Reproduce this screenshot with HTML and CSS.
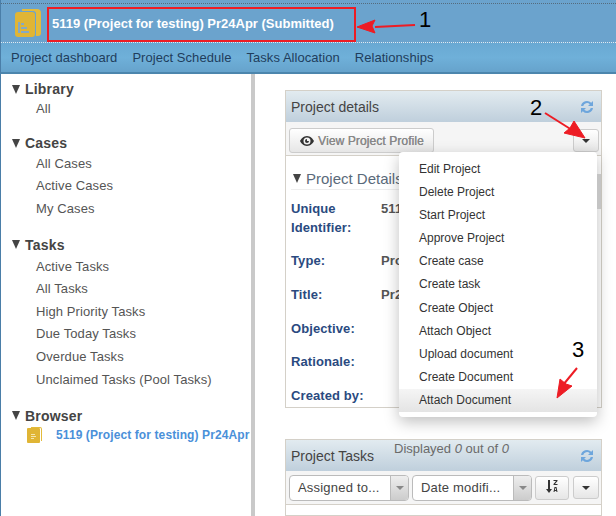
FILE: index.html
```html
<!DOCTYPE html>
<html lang="en">
<head>
    <meta charset="UTF-8">
    <meta name="viewport" content="width=device-width, initial-scale=1.0">
    <title>Project dashboard</title>
    <link rel="stylesheet" href="styles.css">
</head>
<body>
    <header class="topbar">
        <div class="topbar-inner">
            <svg class="logo" width="26" height="28" viewBox="0 0 26 28">
                <path d="M7 0h15q4 0 4 4v20q0 3-3 3h-2V5q0-3-3-3H7z" fill="#e3bb3b"/>
                <path d="M3 3h14q3 0 3 3v19q0 3-3 3H3q-3 0-3-3V6q0-3 3-3z" fill="#e0b535"/>
                <path d="M3 13h2v11H3zM6 14h3v2H6zm0 4h6v2H6zm0 4h8v2H6z" fill="#86a9c4"/>
            </svg>
            <span class="title">5119 (Project for testing) Pr24Apr (Submitted)</span>
        </div>
    </header>
    <nav class="navbar">
        <a>Project dashboard</a>
        <a>Project Schedule</a>
        <a>Tasks Allocation</a>
        <a>Relationships</a>
    </nav>

    <div class="layout">
        <aside class="sidebar">
            <section class="side-group library">
                <h3><i class="caret"></i>Library</h3>
                <ul><li>All</li></ul>
            </section>
            <section class="side-group cases">
                <h3><i class="caret"></i>Cases</h3>
                <ul>
                    <li>All Cases</li>
                    <li>Active Cases</li>
                    <li>My Cases</li>
                </ul>
            </section>
            <section class="side-group tasks-group">
                <h3><i class="caret"></i>Tasks</h3>
                <ul>
                    <li>Active Tasks</li>
                    <li>All Tasks</li>
                    <li>High Priority Tasks</li>
                    <li>Due Today Tasks</li>
                    <li>Overdue Tasks</li>
                    <li>Unclaimed Tasks (Pool Tasks)</li>
                </ul>
            </section>
            <section class="side-group">
                <h3><i class="caret"></i>Browser</h3>
                <div class="browser-item">
                    <svg width="15" height="16" viewBox="0 0 15 16">
                        <path d="M4 0h9q2 0 2 2v12h-1V2q0-1-1-1H4z" fill="#e3bb3b"/>
                        <path d="M1 1h11q1 0 1 1v13q0 1-1 1H1q-1 0-1-1V2q0-1 1-1z" fill="#e0b535"/>
                        <path d="M4 7h4v1H4zm0 2h5v1H4zm0 2h3v1H4z" fill="#f4e6b0"/>
                    </svg>
                    <span>5119 (Project for testing) Pr24Apr</span>
                </div>
            </section>
        </aside>

        <main class="content">
            <div class="panel details">
                <div class="panel-head">
                    <span>Project details</span>
                    <svg class="refresh" width="14" height="14" viewBox="0 0 14 14">
                        <path d="M1 6A6 6 0 0 1 11.200 2.800L13 1v5H8l1.800-1.800A4 4 0 0 0 3.200 6zM13 8A6 6 0 0 1 2.800 11.200L1 13V8h5l-1.800 1.800A4 4 0 0 0 10.800 8z" fill="#6ea6dc"/>
                    </svg>
                </div>
                <div class="toolbar">
                    <button class="btn profile">
                        <svg width="14" height="10" viewBox="0 0 14 10"><path d="M7 0C3.500 0 1 3 0 5c1 2 3.500 5 7 5s6-3 7-5c-1-2-3.500-5-7-5zm0 1.500a3.500 3.500 0 1 1 0 7 3.500 3.500 0 0 1 0-7zM7 3a2 2 0 1 0 2 2H7z" fill="#333"/></svg>
                        View Project Profile
                    </button>
                    <button class="btn caret-btn"><i class="mini-caret"></i></button>
                </div>
                <div class="details-body">
                    <h4><i class="caret"></i>Project Details</h4>
                    <dl>
                        <div class="tall"><dt>Unique Identifier:</dt><dd>5119</dd></div>
                        <div><dt>Type:</dt><dd>Project</dd></div>
                        <div><dt>Title:</dt><dd>Pr24Apr</dd></div>
                        <div><dt>Objective:</dt><dd></dd></div>
                        <div><dt>Rationale:</dt><dd></dd></div>
                        <div><dt>Created by:</dt><dd></dd></div>
                    </dl>
                </div>
            </div>

            <div class="panel tasks">
                <div class="panel-head">
                    <span>Project Tasks</span>
                    <span class="displayed">Displayed <em>0</em> out of <em>0</em></span>
                    <svg class="refresh" width="14" height="14" viewBox="0 0 14 14">
                        <path d="M1 6A6 6 0 0 1 11.200 2.800L13 1v5H8l1.800-1.800A4 4 0 0 0 3.200 6zM13 8A6 6 0 0 1 2.800 11.200L1 13V8h5l-1.800 1.800A4 4 0 0 0 10.800 8z" fill="#6ea6dc"/>
                    </svg>
                </div>
                <div class="toolbar task-tools">
                    <div class="select"><span>Assigned to...</span><b><i class="mini-caret grey"></i></b></div>
                    <div class="select"><span>Date modifi...</span><b><i class="mini-caret grey"></i></b></div>
                    <button class="btn sort">
                        <svg width="12" height="13" viewBox="0 0 12 13"><path d="M2 0h2v9h2l-3 4-3-4h2z" fill="#333"/><path d="M7.500 0h4v1l-2.500 3h2.500v1h-4V4L10 1H7.500zM8.500 7h2l1 5h-1l-.2-1H8.700l-.2 1h-1zm.4 3h1.200l-.4-2h-.4z" fill="#333"/></svg>
                    </button>
                    <button class="btn caret-btn"><i class="mini-caret"></i></button>
                </div>
            </div>
        </main>
    </div>

    <!-- dropdown sits over the details panel -->
    <ul class="menu">
        <li>Edit Project</li>
        <li>Delete Project</li>
        <li>Start Project</li>
        <li>Approve Project</li>
        <li>Create case</li>
        <li>Create task</li>
        <li>Create Object</li>
        <li>Attach Object</li>
        <li>Upload document</li>
        <li>Create Document</li>
        <li class="active">Attach Document</li>
    </ul>
    <div class="scroll-thumb"></div>

    <!-- red annotations drawn on top of the screenshot -->
    <div class="callout-box"></div>
    <svg class="arrows" width="616" height="516" viewBox="0 0 616 516">
        <g fill="#ed1c24" stroke="#ed1c24">
            <path d="M415 25L375 27" stroke-width="2" fill="none"/>
            <path d="M357 27L375 20L372 26L375 33z"/>
            <path d="M545 113L572 130" stroke-width="2" fill="none"/>
            <path d="M585 138L564 133L570 128L574 121z"/>
            <path d="M577 368L563 385" stroke-width="2" fill="none"/>
            <path d="M557 398L560 379L566 384L572 386z"/>
        </g>
    </svg>
    <span class="num n1">1</span>
    <span class="num n2">2</span>
    <span class="num n3">3</span>
</body>
</html>
```

FILE: styles.css
```css
/* Basic page setup */
* {
    box-sizing: border-box;
}

html, body {
    height: 516px;
    overflow: hidden;
}

body {
    margin: 0;
    font-family: "Liberation Sans", Arial, sans-serif;
    font-size: 13px;
    color: #444;
    background-color: #fff;
    position: relative;
}

ul, dl, dd, h3, h4 {
    margin: 0;
    padding: 0;
    list-style: none;
}

/* Header */
.topbar {
    height: 43px;
    padding-top: 3px;
    background-color: #6ba3cd;
    border-left: 1px solid #4a7ea8;
}

.topbar-inner {
    height: 40px;
    padding-left: 14px;
    display: flex;
    align-items: center;
    gap: 11px;
    border-top: 1px dotted #556b7d;
    border-bottom: 1px dotted #dfeaf2;
}

.logo {
    flex: none;
}

.title {
    color: #fff;
    font-weight: bold;
    font-size: 13px;
}

.navbar {
    height: 31px;
    padding-left: 10px;
    padding-bottom: 1px;
    display: flex;
    align-items: center;
    gap: 15px;
    background: linear-gradient(#69a9d3, #6fb0d9 50%, #66a3cc);
    border-left: 1px solid #4a7ea8;
    border-bottom: 2px solid #4c86ad;
    color: #1f3d5c;
    letter-spacing: 0.05px;
}

/* Sidebar and content */
.layout {
    display: flex;
    height: 442px;
}

.sidebar {
    width: 255px;
    flex: none;
    padding: 6px 0 0 11px;
    border-right: 4px solid #c9c9c9;
    border-left: 1px solid #4a7ea8;
    overflow: hidden;
}

.side-group ul {
    margin-top: 2px;
}

.side-group.library ul {
    margin-top: 1px;
}

.side-group.library {
    margin-bottom: 16px;
}

.side-group.cases {
    margin-bottom: 15.500px;
}

.side-group.tasks-group ul {
    margin-top: 3px;
}

.side-group.tasks-group {
    margin-bottom: 15.500px;
}

.side-group h3 {
    font-size: 14px;
    font-weight: bold;
    color: #444;
    display: flex;
    align-items: center;
    line-height: 18px;
    letter-spacing: 0.2px;
}

.caret {
    width: 0;
    height: 0;
    margin-right: 5px;
    border-left: 4.500px solid transparent;
    border-right: 4.500px solid transparent;
    border-top: 9px solid #444;
}

.side-group li {
    padding-left: 24px;
    line-height: 22.700px;
    color: #555;
    letter-spacing: 0.1px;
}

.side-group li:first-child {
    line-height: 19px;
    margin-bottom: 2px;
}

.browser-item {
    display: flex;
    align-items: center;
    gap: 14px;
    padding-left: 15px;
    margin-top: 2px;
    color: #4a90d9;
    font-size: 12px;
    font-weight: bold;
    letter-spacing: 0.1px;
    white-space: nowrap;
}

.content {
    flex: 1;
    min-width: 0;
    padding: 16px 14px 0 30px;
    display: flex;
    flex-direction: column;
    gap: 31px;
}

.panel {
    border: 1px solid #d4d0c8;
    background-color: #fff;
}

.panel-head {
    height: 31px;
    padding: 0 7px 0 5px;
    display: flex;
    align-items: center;
    justify-content: space-between;
    position: relative;
    background: linear-gradient(#e2ebf0, #bfcfdc);
    font-size: 14px;
    color: #444;
}

.refresh {
    flex: none;
}

.displayed {
    position: absolute;
    left: 108px;
    top: 1px;
    font-size: 13px;
    color: #6a6a6a;
}

.toolbar {
    height: 34px;
    padding: 6px 2px 0 3px;
    display: flex;
    justify-content: space-between;
    background-color: #f5f5f5;
    border-bottom: 1px solid #d4d0c8;
}

.btn {
    font-family: inherit;
    border: 1px solid #ccc;
    border-radius: 3px;
    background: linear-gradient(#fff, #e6e6e6);
}

.profile {
    width: 145px;
    height: 25px;
    color: #888;
    font-size: 12px;
    display: flex;
    align-items: center;
    gap: 4px;
    padding: 0 0 0 10px;
    letter-spacing: 0.1px;
    white-space: nowrap;
    text-shadow: 0.3px 0 0 #888;
}

.caret-btn {
    width: 26px;
    height: 23px;
    margin-top: 1px;
    display: flex;
    align-items: center;
    justify-content: center;
    padding: 0;
}

.mini-caret {
    width: 0;
    height: 0;
    border-left: 4px solid transparent;
    border-right: 4px solid transparent;
    border-top: 4px solid #333;
}

.mini-caret.grey {
    border-top-color: #888;
}

.details {
    height: 318px;
    flex: none;
    overflow: hidden;
}

.details-body {
    padding: 11px 6px 0 5px;
}

.details-body h4 {
    font-size: 15px;
    font-weight: normal;
    color: #5a6a7a;
    display: flex;
    align-items: center;
    height: 23px;
    border-bottom: 1px solid #eee;
}

.details-body h4 .caret {
    margin: 0 5px 0 2px;
}

.details-body dl {
    padding-top: 1px;
}

.details-body dl > div {
    display: flex;
    height: 33.750px;
    padding-top: 7px;
    font-size: 13px;
    font-weight: bold;
    line-height: 19px;
    letter-spacing: 0.1px;
}

.details-body dl > .tall {
    height: 53px;
    padding-top: 8px;
}

.details-body dt {
    width: 90px;
    flex: none;
    color: #2a4a80;
}

/* the dropdown covers the rest of these values */
.details-body dd {
    width: 18px;
    overflow: hidden;
    white-space: nowrap;
    color: #555;
}

.tasks {
    flex: 1;
}

.task-tools {
    height: 34px;
    gap: 3px;
    justify-content: flex-start;
    padding-top: 4px;
}

.select {
    width: 120px;
    height: 26px;
    display: flex;
    border: 1px solid #bbb;
    border-radius: 4px;
    overflow: hidden;
    background-color: #fff;
}

.select span {
    flex: 1;
    padding: 4px 0 0 8px;
    white-space: nowrap;
    letter-spacing: 0.2px;
    color: #444;
}

.select b {
    width: 18px;
    display: flex;
    align-items: center;
    justify-content: center;
    background: linear-gradient(#eee, #ccc);
    border-left: 1px solid #bbb;
}

.sort {
    width: 34px;
    height: 24px;
    margin-top: 1px;
    margin-right: 1px;
    padding: 0;
}

/* Dropdown menu */
.menu {
    position: absolute;
    left: 399px;
    top: 152px;
    width: 198px;
    height: 265px;
    padding: 6px 0;
    background-color: #fff;
    border-radius: 4px;
    box-shadow: 0 5px 15px rgba(0, 0, 0, 0.25);
    font-size: 12px;
    color: #333;
}

.menu li {
    height: 23.100px;
    line-height: 23.100px;
    padding-left: 20px;
}

.menu li.active {
    background: linear-gradient(#f5f5f5, #e4e4e4);
}

.scroll-thumb {
    position: absolute;
    left: 597px;
    top: 174px;
    width: 4px;
    height: 35px;
    background-color: #c4c4c4;
}

/* Annotations */
.callout-box {
    position: absolute;
    left: 47px;
    top: 7px;
    width: 309px;
    height: 35px;
    border: 2px solid #ed1c24;
}

.arrows {
    position: absolute;
    left: 0;
    top: 0;
}

.num {
    position: absolute;
    font-size: 22px;
    color: #000;
    line-height: 24px;
}

.n1 { left: 419px; top: 8px; }
.n2 { left: 530px; top: 96px; }
.n3 { left: 572px; top: 338px; }
```
